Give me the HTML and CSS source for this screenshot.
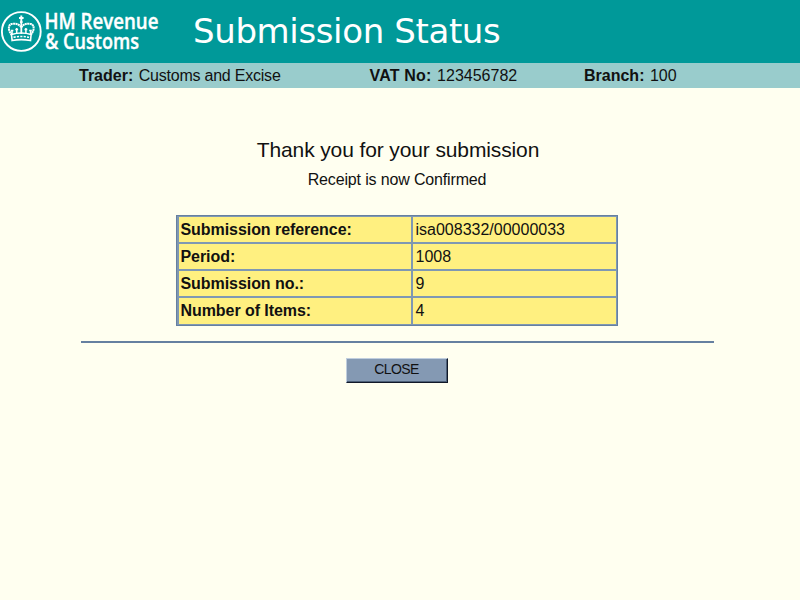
FILE: index.html
```html
<!DOCTYPE html>
<html lang="en">
<head>
<meta charset="utf-8">
<title>Submission Status</title>
<link rel="stylesheet" href="styles.css">
</head>
<body>
<header class="banner">
  <svg class="logo" width="180" height="63" viewBox="0 0 180 63" role="img" aria-label="HM Revenue &amp; Customs">
    <circle cx="21.3" cy="31.500" r="19.400" fill="none" stroke="#fff" stroke-width="1.900"/>
    <g fill="none" stroke="#fff">
      <path d="M21.300 15.500v6M19 18h4.600" stroke-width="1.900"/>
      <circle cx="21.300" cy="22" r="1" fill="#fff"/>
      <path d="M12 35C7.500 30 8 24.200 12.500 23.800C16.500 23.300 19.800 24.500 21.300 27.500C22.800 24.500 26 23.300 30 23.800C34.500 24.200 35 30 30.600 35" stroke-width="2" stroke-dasharray="2 .4"/>
      <path d="M21.300 22v12" stroke-width="1.800"/>
      <path d="M12 30v4M16.700 28v6M25.900 28v6M30.600 30v4M10.800 30.500h2.600M15.300 29.500h2.800M24.500 29.500h2.800M29.200 30.500h2.600" stroke-width="1.500"/>
      <path d="M11.500 34.500q9.800-3 19.600 0l-.6 6q-9.200-1.800-18.400 0z" stroke-width="1.600"/>
      <path d="M13.500 37.300q7.800-1.600 15.600 0" stroke-width="1.600" stroke-dasharray="2.200 1.200"/>
    </g>
    <text class="logo-text" x="44.500" y="28.900" textLength="114" lengthAdjust="spacingAndGlyphs">HM Revenue</text>
    <text class="logo-text" x="45" y="48.900" textLength="94" lengthAdjust="spacingAndGlyphs">&amp; Customs</text>
  </svg>
  <h1 class="title">Submission Status</h1>
</header>
<div class="details">
  <div class="trader"><b>Trader:</b> <span>Customs and Excise</span></div>
  <div class="vat"><b>VAT No:</b> <span>123456782</span></div>
  <div class="branch"><b>Branch:</b> <span>100</span></div>
</div>
<main class="content">
  <h2 class="thanks">Thank you for your submission</h2>
  <p class="receipt">Receipt is now Confirmed</p>
  <dl class="summary">
    <dt>Submission reference:</dt><dd>isa008332/00000033</dd>
    <dt>Period:</dt><dd>1008</dd>
    <dt>Submission no.:</dt><dd>9</dd>
    <dt class="last">Number of Items:</dt><dd class="last">4</dd>
  </dl>
  <hr class="rule">
  <button class="close" type="button">CLOSE</button>
</main>
</body>
</html>
```
FILE: styles.css
```css
* { box-sizing: border-box; }
body {
  margin: 0;
  height: 600px;
  overflow: hidden;
  background: #fffff0;
  color: #111;
  font: 16px "Liberation Sans", Arial, sans-serif;
}
.banner {
  display: flex;
  height: 63px;
  background: #009999;
}
.logo { flex: none; }
.logo-text {
  font: 600 21px "Open Sans", sans-serif;
  fill: #fff;
  stroke: #fff;
  stroke-width: 0.35px;
}
.title {
  margin: 0 0 0 13px;
  font: 34px/63px "DejaVu Sans", Verdana, sans-serif;
  letter-spacing: -0.37px;
  color: #fff;
  white-space: nowrap;
}
.details {
  display: grid;
  grid-template-columns: 290.5px 214.5px 1fr;
  height: 25px;
  padding-left: 79px;
  background: #99cccc;
  line-height: 25px;
  white-space: nowrap;
}
.details b { margin-right: 1px; }
.trader span { letter-spacing: -0.22px; }
.vat b { letter-spacing: 0.2px; }
.content {
  display: flex;
  flex-direction: column;
  align-items: center;
  width: 796px;
}
.thanks {
  margin: 50px 0 0;
  font-size: 21px;
  font-weight: 400;
  letter-spacing: -0.12px;
  line-height: 24px;
}
.receipt {
  margin: 8px 2px 0 0;
  letter-spacing: -0.15px;
  line-height: 20px;
}
.summary {
  display: grid;
  grid-template-columns: 232px 203px;
  grid-template-rows: 25px 25px 25px 26px;
  gap: 2px;
  width: 442px;
  height: 111px;
  margin: 25px 2px 0 0;
  padding: 1px 1px 1px 1.5px;
  border: 1px solid #6680a0;
  background: #7f98b3;
}
.summary dt, .summary dd {
  margin: 0;
  padding-left: 3px;
  background: #fff080;
  line-height: 25px;
}
.summary dt {
  padding-left: 2px;
  font-weight: 700;
  letter-spacing: -0.06px;
}
.summary .last { line-height: 26px; }
.rule {
  width: 633px;
  height: 2px;
  margin: 15px 1px 0 0;
  border: 0;
  background: #6680a0;
}
.close {
  width: 102px;
  height: 25px;
  margin: 15px 2px 0 0;
  padding: 0 1px 3px 0;
  border: 1px solid;
  border-color: #c0cede #101828 #101828 #c0cede;
  box-shadow: inset -1px -1px #4c5f78;
  background: #8499b3;
  color: #111;
  font: 14px "Liberation Sans", Arial, sans-serif;
  letter-spacing: -0.6px;
}
```
